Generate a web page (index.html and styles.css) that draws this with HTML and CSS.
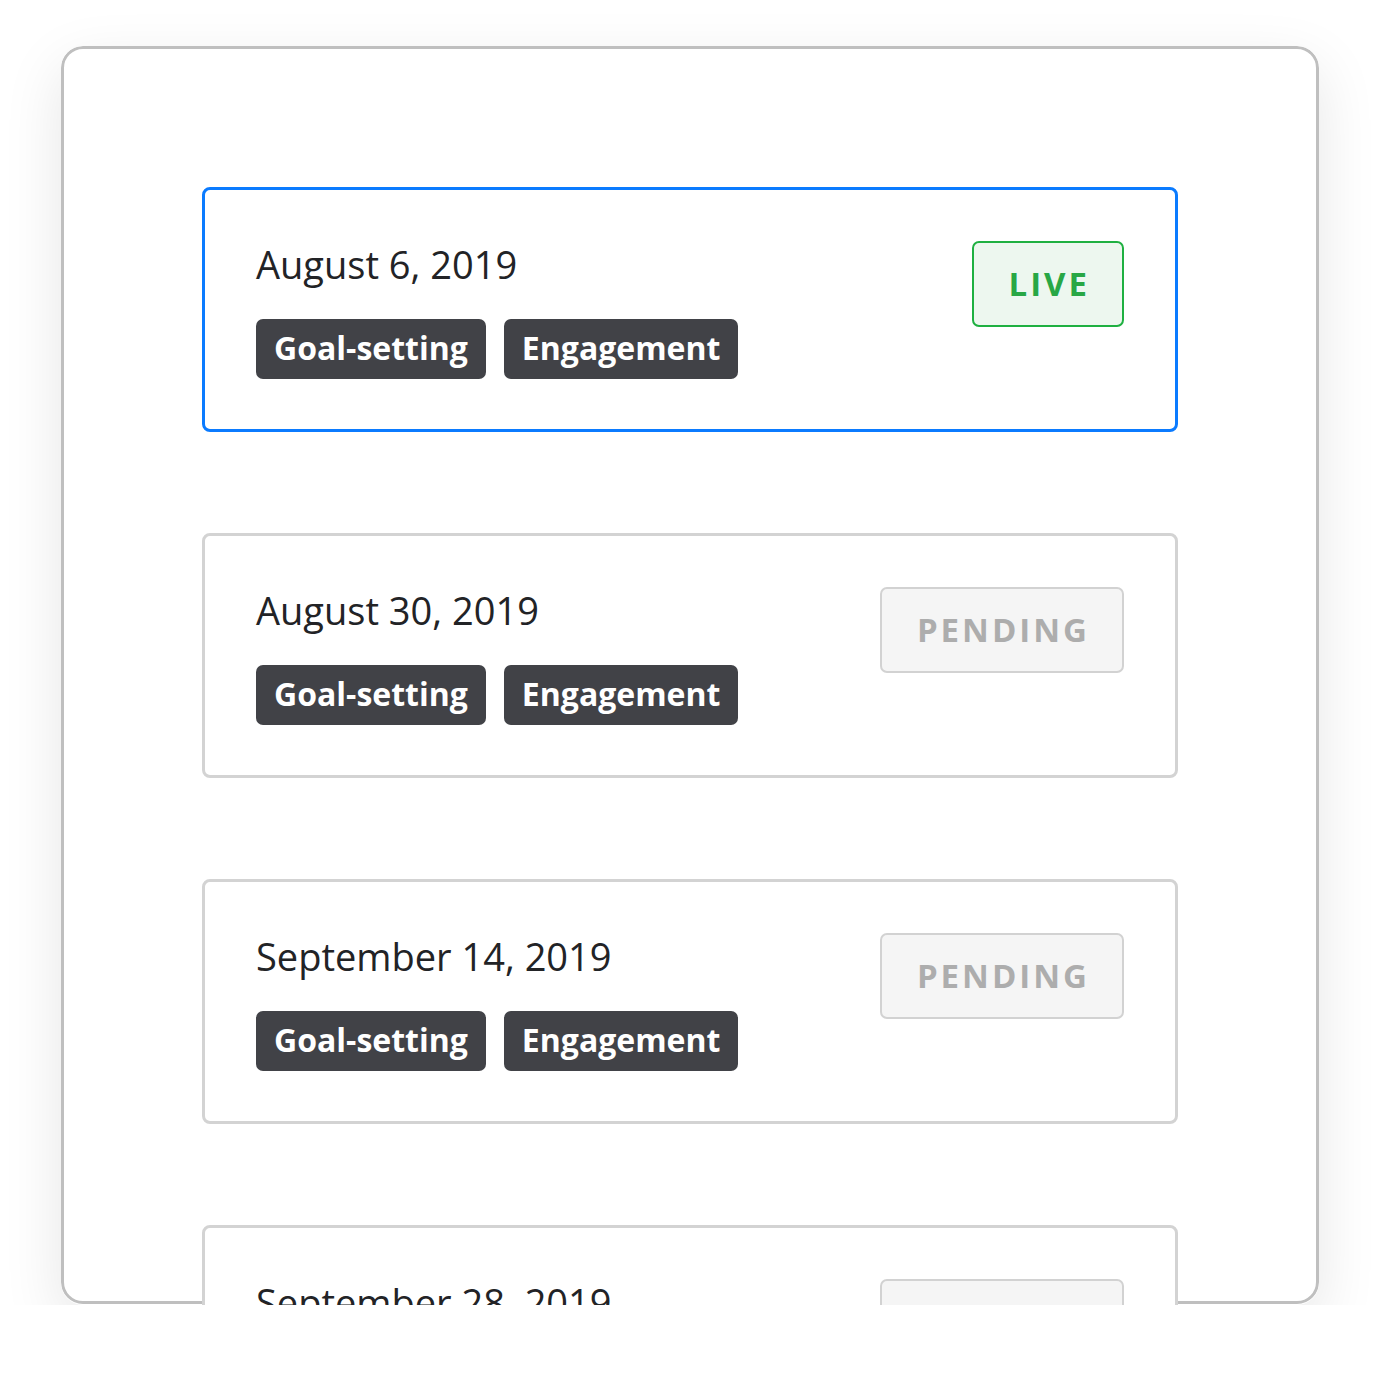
FILE: index.html
```html
<!DOCTYPE html>
<html>
<head>
<meta charset="utf-8">
<link rel="stylesheet" href="styles.css">
</head>
<body>
<div class="frame">
  <div class="list">
    <div class="card card-active">
      <div class="info">
        <div class="date">August 6, 2019</div>
        <div class="tags"><span class="tag">Goal-setting</span><span class="tag">Engagement</span></div>
      </div>
      <div class="status status-live">LIVE</div>
    </div>
    <div class="card">
      <div class="info">
        <div class="date">August 30, 2019</div>
        <div class="tags"><span class="tag">Goal-setting</span><span class="tag">Engagement</span></div>
      </div>
      <div class="status status-pending">PENDING</div>
    </div>
    <div class="card">
      <div class="info">
        <div class="date">September 14, 2019</div>
        <div class="tags"><span class="tag">Goal-setting</span><span class="tag">Engagement</span></div>
      </div>
      <div class="status status-pending">PENDING</div>
    </div>
    <div class="card">
      <div class="info">
        <div class="date">September 28, 2019</div>
        <div class="tags"><span class="tag">Goal-setting</span><span class="tag">Engagement</span></div>
      </div>
      <div class="status status-pending">PENDING</div>
    </div>
  </div>
</div>
</body>
</html>
```

FILE: styles.css
```css
* { box-sizing: border-box; }
html, body { margin: 0; padding: 0; background: #ffffff; }
body {
  font-family: "Open Sans", "Noto Sans", sans-serif;
  color: #222326;
  padding-top: 46px;
}
.frame {
  position: relative;
  width: 1258px;
  height: 1259px;
  margin: 0 auto;
  border-radius: 22px;
  box-shadow: 0 20px 60px rgba(0, 0, 0, 0.1);
  overflow: hidden;
  background: #fff;
}
.frame::before {
  content: "";
  position: absolute;
  inset: 0 0 1px 0;
  border: 3px solid #bfbfbf;
  border-radius: 22px;
  z-index: 0;
}
.list {
  position: relative;
  z-index: 1;
  padding: 141px 141px 0;
  display: flex;
  flex-direction: column;
  gap: 101px;
}
.card {
  display: flex;
  justify-content: space-between;
  align-items: flex-start;
  height: 245px;
  flex-shrink: 0;
  padding: 51px 51px 50px 51px;
  border: 3px solid #d3d3d3;
  border-radius: 8px;
  background: #fff;
}
.card-active { border-color: #0b7bff; }
.date {
  font-size: 38px;
  line-height: 46px;
  margin-bottom: 32px;
}
.tags { display: flex; gap: 18px; }
.tag {
  display: inline-block;
  background: #414247;
  color: #fff;
  font-weight: 700;
  font-size: 32px;
  line-height: 58px;
  height: 60px;
  padding: 0 18px;
  border-radius: 7px;
}
.status {
  font-weight: 700;
  font-size: 33px;
  line-height: 40px;
  letter-spacing: 3px;
  padding: 21px 32px 21px 35px;
  border: 2px solid;
  border-radius: 7px;
}
.status-live {
  color: #28a745;
  background: #edf7ef;
  border-color: #1fb041;
}
.status-pending {
  color: #adadad;
  background: #f5f5f5;
  border-color: #d2d2d2;
}
```
